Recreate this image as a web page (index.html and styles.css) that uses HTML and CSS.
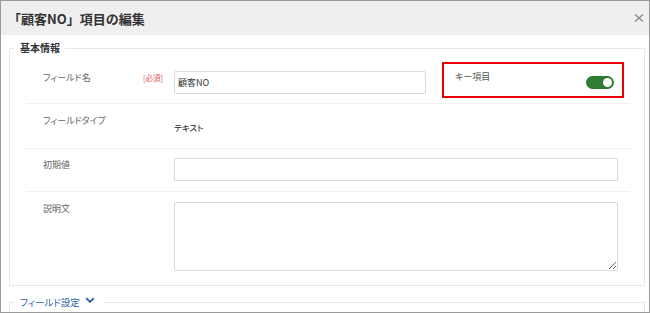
FILE: index.html
```html
<!DOCTYPE html>
<html lang="ja">
<head>
    <meta charset="UTF-8">
    <title>項目の編集</title>
    <link rel="stylesheet" href="styles.css">
</head>
<body>
    <div class="dialog">
        <!-- Header -->
        <div class="dialog-header">
            <h2 class="dialog-title">「顧客NO」項目の編集</h2>
            <button class="close-btn" type="button" aria-label="閉じる">
                <svg width="10" height="10" viewBox="0 0 10 10">
                    <path d="M1 1.5 L9 8.5 M9 1.5 L1 8.5" stroke="#8a8a8a" stroke-width="1.3" fill="none"/>
                </svg>
            </button>
        </div>

        <div class="dialog-body">
            <!-- 基本情報 -->
            <fieldset class="section">
                <legend class="section-title">基本情報</legend>
                <div class="rows">
                    <div class="row row-name">
                        <div class="row-label">
                            <span>フィールド名</span>
                            <span class="required">[必須]</span>
                        </div>
                        <input class="text-input name-input" type="text" value="顧客NO">
                        <div class="key-box">
                            <span class="key-label">キー項目</span>
                            <span class="toggle"><span class="knob"></span></span>
                        </div>
                    </div>

                    <div class="row row-type">
                        <div class="row-label"><span>フィールドタイプ</span></div>
                        <div class="row-value">テキスト</div>
                    </div>

                    <div class="row">
                        <div class="row-label"><span>初期値</span></div>
                        <input class="text-input wide-input" type="text">
                    </div>

                    <div class="row row-desc">
                        <div class="row-label"><span>説明文</span></div>
                        <textarea class="text-area"></textarea>
                    </div>
                </div>
            </fieldset>

            <!-- フィールド設定 -->
            <fieldset class="section section-collapsed">
                <legend class="section-title link-title">
                    <span>フィールド設定</span>
                    <svg class="chevron" width="10" height="7" viewBox="0 0 10 7">
                        <path d="M1.2 1.2 L5 5 L8.8 1.2" stroke="#2d5fa8" stroke-width="1.8" fill="none"/>
                    </svg>
                </legend>
            </fieldset>
        </div>
    </div>
</body>
</html>
```

FILE: styles.css
```css
* {
    box-sizing: border-box;
}

body {
    margin: 0;
    font-family: "Noto Sans CJK JP", "Noto Sans", sans-serif;
    font-feature-settings: "palt";
    color: #333;
    background: #fff;
}

.dialog {
    width: 650px;
    height: 313px;
    border: 1px solid #9a9a9a;
    overflow: hidden;
    background: #fff;
}

.dialog-header {
    height: 34px;
    background: #efefef;
    display: flex;
    align-items: center;
    justify-content: space-between;
    padding: 0 5px 0 7px;
}

.dialog-title {
    margin: 0;
    font-size: 13px;
    font-weight: bold;
    font-feature-settings: normal;
    color: #333;
}

.close-btn {
    border: none;
    background: none;
    padding: 0;
    width: 10px;
    height: 10px;
    display: flex;
}

.dialog-body {
    padding: 6px 4px 0 8px;
}

.section {
    margin: 0;
    padding: 0;
    border: 1px solid #e8e8e8;
}

.section-title {
    margin-left: 4px;
    padding: 0 5px 0 6px;
    font-size: 10px;
    line-height: 14px;
    font-weight: bold;
    color: #333;
}

.rows {
    margin: 0 14px 0 16px;
}

.row {
    display: flex;
    align-items: flex-start;
    padding: 9px 0 10px 17px;
    border-top: 1px solid #f0f0f0;
}

.row-name {
    padding: 7px 0 5px 17px;
    border-top: none;
}

.row-type {
    padding: 10px 0 15px 17px;
}

.row-desc {
    padding: 10px 0 14px 17px;
}

.row-label {
    width: 131px;
    flex-shrink: 0;
    display: flex;
    justify-content: space-between;
    padding-right: 11px;
    margin-top: 1px;
    font-size: 9px;
    line-height: 12px;
    color: #666;
}

.row-name .row-label {
    margin-top: 10px;
}

.required {
    color: #e0605a;
    font-size: 7.5px;
}

.row-value {
    margin-top: 7px;
    font-size: 8.5px;
    line-height: 12px;
    color: #222;
}

.text-input {
    height: 23px;
    border: 1px solid #d9d9d9;
    border-radius: 2px;
    padding: 0 3px;
    font-family: inherit;
    font-size: 9px;
    color: #333;
}

.name-input {
    width: 252px;
    margin-top: 9px;
}

.wide-input {
    flex: 1;
    margin-right: 12px;
}

.text-area {
    flex: 1;
    height: 69px;
    margin: 0 12px 0 0;
    border: 1px solid #d9d9d9;
    border-radius: 2px;
    font-family: inherit;
    font-size: 9px;
}

.key-box {
    width: 182px;
    height: 36px;
    margin-left: 16px;
    border: 2px solid #ee0000;
    display: flex;
    justify-content: space-between;
    align-items: flex-start;
    padding: 7px 8px 0 11px;
}

.key-label {
    font-size: 9px;
    line-height: 12px;
    color: #555;
}

.toggle {
    width: 28px;
    height: 13px;
    margin-top: 5px;
    border-radius: 7px;
    background: #2e7d32;
    display: flex;
    justify-content: flex-end;
    align-items: center;
    padding: 0 2px;
}

.knob {
    width: 9px;
    height: 9px;
    border-radius: 50%;
    background: #fff;
}

.section-collapsed {
    margin-top: 8px;
    height: 40px;
}

.link-title {
    display: flex;
    align-items: flex-start;
    gap: 5px;
    padding: 0 9px 0 6px;
    font-size: 9.5px;
    line-height: 16px;
    font-weight: normal;
    color: #2d5fa8;
}

.chevron {
    margin-top: 3px;
}
```
